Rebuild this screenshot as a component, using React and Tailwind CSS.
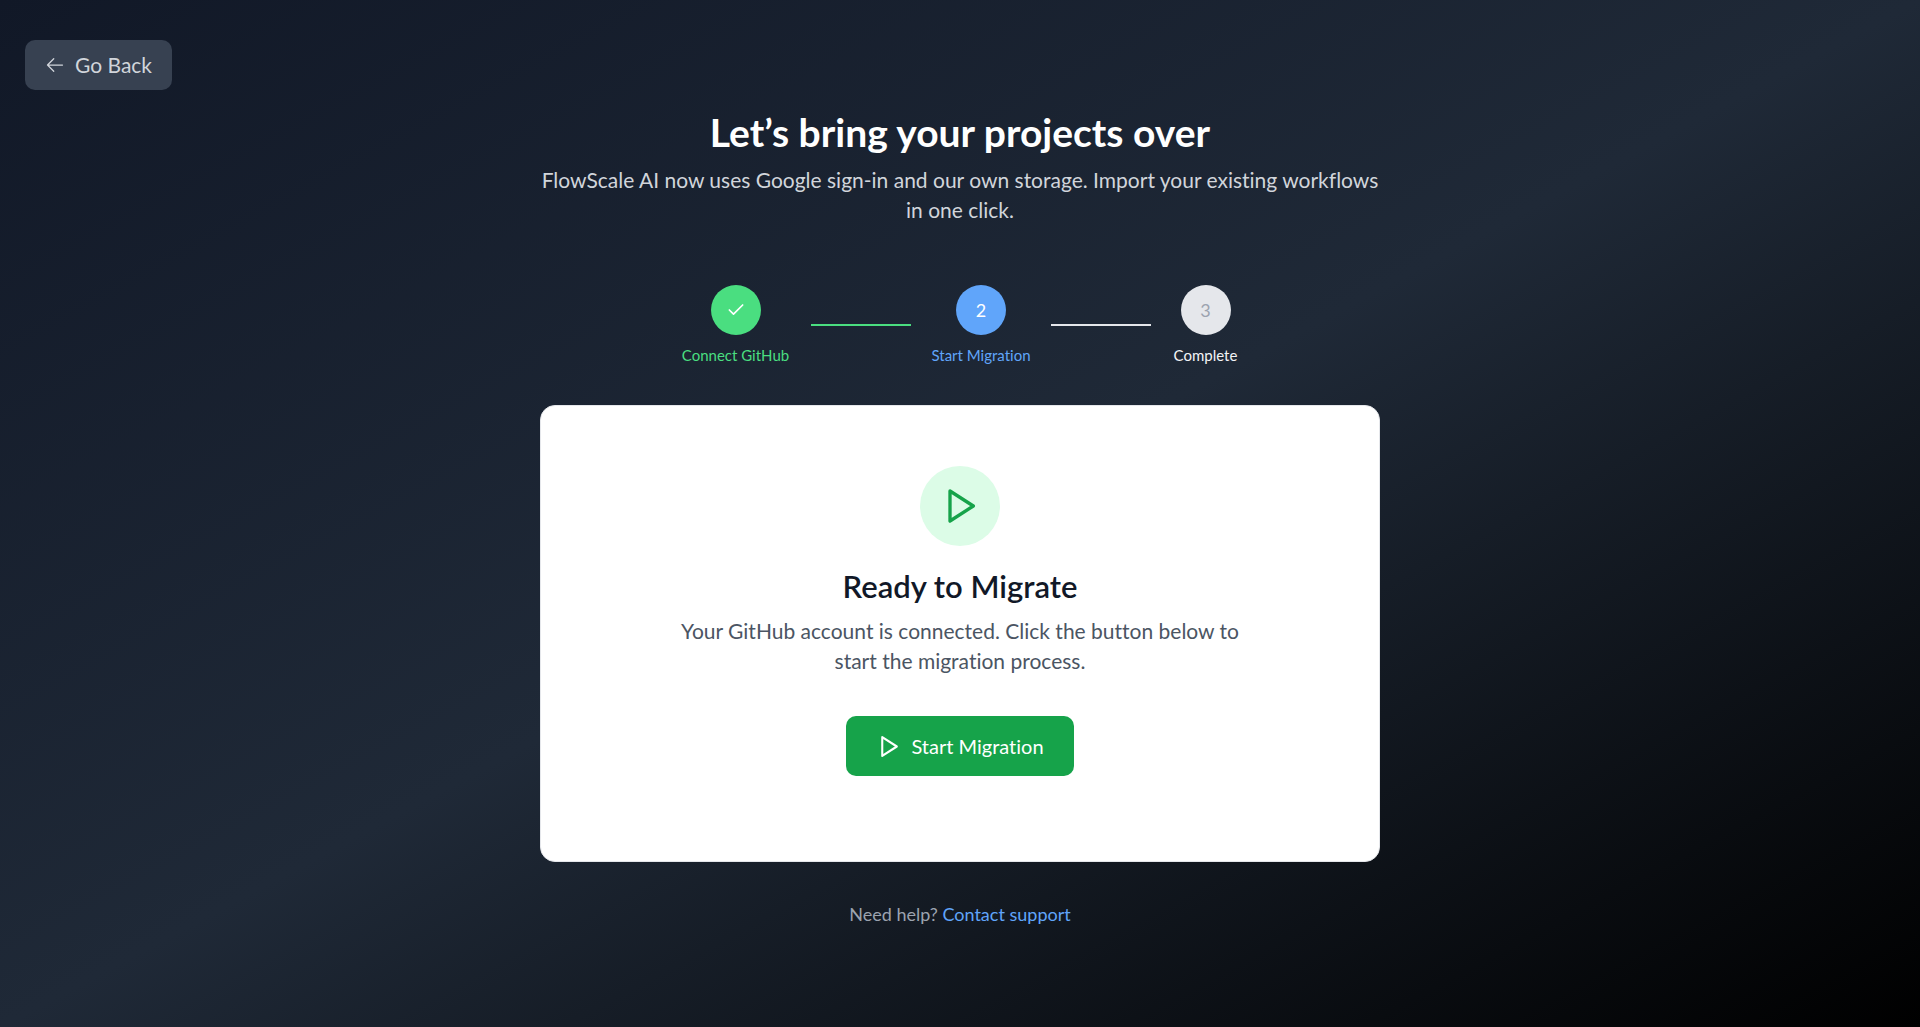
import { Fragment } from "react";

function ArrowLeft({ className }) {
  return (
    <svg viewBox="0 0 24 24" className={className} fill="none" stroke="currentColor" strokeWidth="1.5" strokeLinecap="round" strokeLinejoin="round" aria-hidden="true">
      <path d="M10.5 19.5 3 12m0 0 7.5-7.5M3 12h18" />
    </svg>
  );
}

function Check({ className }) {
  return (
    <svg viewBox="0 0 24 24" className={className} fill="none" stroke="currentColor" strokeWidth="2" strokeLinecap="round" strokeLinejoin="round" aria-hidden="true">
      <path d="M20 6 9 17l-5-5" />
    </svg>
  );
}

function Play({ className }) {
  return (
    <svg viewBox="0 0 24 24" className={className} fill="none" stroke="currentColor" strokeWidth="2" strokeLinecap="round" strokeLinejoin="round" aria-hidden="true">
      <polygon points="6 3 20 12 6 21 6 3" />
    </svg>
  );
}

const steps = [
  { label: "Connect GitHub", mark: <Check className="size-5" />, width: "w-[111px]", circle: "bg-[#4ade80] text-white", text: "text-[#4ade80]", line: "bg-[#4ade80]" },
  { label: "Start Migration", mark: "2", width: "w-[100px]", circle: "bg-[#60a5fa] text-white", text: "text-[#60a5fa]", line: "bg-[#e5e7eb]" },
  { label: "Complete", mark: "3", width: "w-[69px]", circle: "bg-[#e5e7eb] text-[#9ca3af]", text: "text-[#f3f4f6]" },
];

export default function App() {
  return (
    <div className="min-h-screen bg-linear-to-br/srgb from-[#111827] via-[#1f2937] to-black px-[25px] pt-10 pb-20 font-['Lato',sans-serif] text-[21px] leading-[30px] [font-variant-ligatures:none]">
      <button type="button" className="flex h-[50px] items-center gap-[10px] rounded-[10px] bg-[#374151] px-5 text-[#d1d5db]">
        <ArrowLeft className="size-5" />
        Go Back
      </button>

      <main className="mx-auto mt-5 max-w-[840px] text-center">
        <h1 className="mb-[10px] text-[39px] leading-[45px] font-bold text-white">Let’s bring your projects over</h1>
        <p className="text-[#d1d5db]">
          FlowScale AI now uses Google sign-in and our own storage. Import your existing workflows in one click.
        </p>

        <ol className="mt-[60px] flex items-center justify-center gap-5">
          {steps.map((step) => (
            <Fragment key={step.label}>
              <li className={`flex flex-col items-center gap-[10px] ${step.width}`}>
                <span className={`flex size-[50px] items-center justify-center rounded-full text-[18px] ${step.circle}`}>{step.mark}</span>
                <span className={`text-[15px] leading-5 whitespace-nowrap ${step.text}`}>{step.label}</span>
              </li>
              {step.line && <li aria-hidden="true" className={`h-[2px] w-[100px] ${step.line}`} />}
            </Fragment>
          ))}
        </ol>

        <section className="mt-10 flex flex-col items-center rounded-[15px] border border-[#e5e7eb] bg-white px-[60px] pt-[60px] pb-[85px]">
          <div className="flex size-20 items-center justify-center rounded-full bg-[#dcfce7] text-[#16a34a]">
            <Play className="size-10" />
          </div>
          <h2 className="mt-5 mb-[10px] text-[31px] leading-10 font-semibold text-[#111827]">Ready to Migrate</h2>
          <p className="max-w-[560px] text-[#4b5563]">
            Your GitHub account is connected. Click the button below to start the migration process.
          </p>
          <button type="button" className="mt-10 flex h-[60px] items-center gap-[10px] rounded-[10px] bg-[#16a34a] px-[30px] text-[20px] text-white">
            <Play className="size-[25px]" />
            Start Migration
          </button>
        </section>

        <p className="mt-10 text-[18px] leading-[25px] text-[#9ca3af]">
          Need help? <a href="#support" className="text-[#60a5fa]">Contact support</a>
        </p>
      </main>
    </div>
  );
}
